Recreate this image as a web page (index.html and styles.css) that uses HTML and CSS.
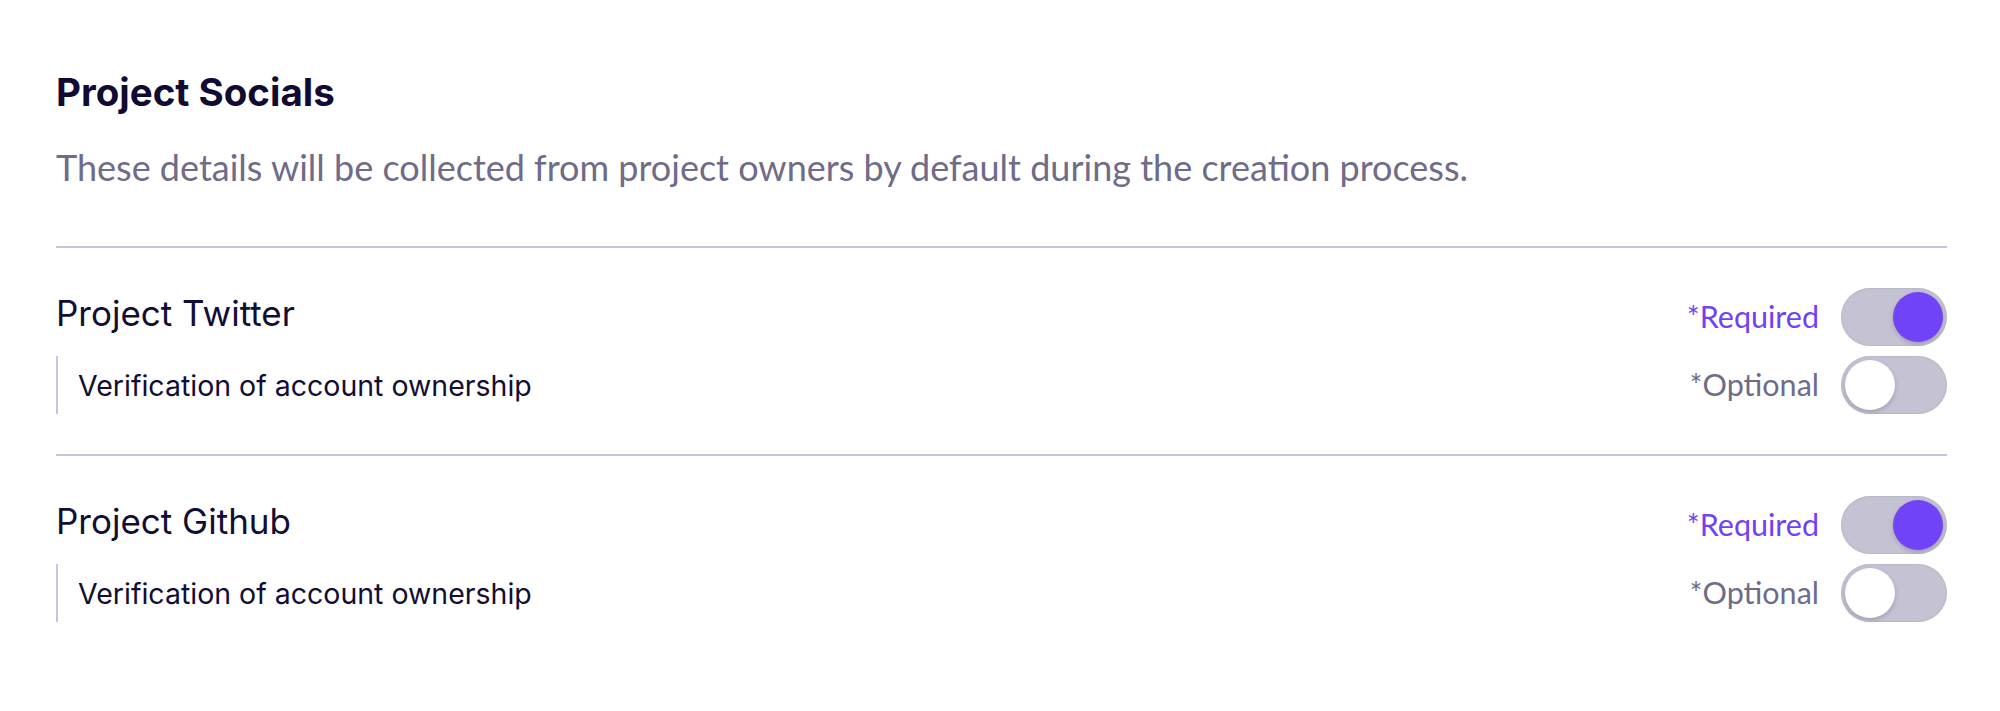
FILE: index.html
```html
<!DOCTYPE html>
<html>
<head>
    <meta charset="utf-8">
    <title>Project Socials</title>
    <link rel="stylesheet" href="styles.css">
</head>
<body>
    <div class="container">
        <h1 class="title">Project Socials</h1>
        <p class="subtitle">These details will be collected from project owners by default during the creation process.</p>

        <div class="social-group">
            <div class="row">
                <div class="row-label">Project Twitter</div>
                <div class="row-control">
                    <span class="flag required">*Required</span>
                    <label class="switch">
                        <input type="checkbox" checked>
                        <span class="slider"></span>
                    </label>
                </div>
            </div>
            <div class="row">
                <div class="row-sublabel">Verification of account ownership</div>
                <div class="row-control">
                    <span class="flag optional">*Optional</span>
                    <label class="switch">
                        <input type="checkbox">
                        <span class="slider"></span>
                    </label>
                </div>
            </div>
        </div>

        <div class="social-group">
            <div class="row">
                <div class="row-label">Project Github</div>
                <div class="row-control">
                    <span class="flag required">*Required</span>
                    <label class="switch">
                        <input type="checkbox" checked>
                        <span class="slider"></span>
                    </label>
                </div>
            </div>
            <div class="row">
                <div class="row-sublabel">Verification of account ownership</div>
                <div class="row-control">
                    <span class="flag optional">*Optional</span>
                    <label class="switch">
                        <input type="checkbox">
                        <span class="slider"></span>
                    </label>
                </div>
            </div>
        </div>
    </div>
</body>
</html>
```

FILE: styles.css
```css
body {
    margin: 0;
    background-color: #fff;
    font-family: Inter, "Noto Sans", sans-serif;
    color: #120e33;
}

.container {
    padding: 70px 53px 0 56px;
}

.title {
    margin: 0;
    font-size: 38.5px;
    line-height: 44px;
    font-weight: 700;
    color: #110b33;
}

.subtitle {
    margin: 31px 0 57px;
    font-family: Lato, "Noto Sans", sans-serif;
    font-size: 36px;
    line-height: 44px;
    color: #6f6b89;
}

.social-group {
    display: flex;
    flex-direction: column;
    gap: 10px;
    padding: 40px 0;
    border-top: 2px solid #c8c6d6;
}

.row {
    display: flex;
    align-items: center;
    justify-content: space-between;
    height: 58px;
}

.row-label {
    font-size: 35px;
    padding-bottom: 8px;
}

.row-sublabel {
    display: flex;
    align-items: center;
    height: 58px;
    padding-left: 20px;
    border-left: 2px solid #c8c6d6;
    font-size: 28.5px;
}

.row-control {
    display: flex;
    align-items: center;
    gap: 22px;
}

.flag {
    font-family: Lato, "Noto Sans", sans-serif;
    font-size: 30.5px;
    padding-bottom: 3px;
}

.required {
    color: #7041f5;
}

.optional {
    color: #6f6b89;
}

.switch {
    position: relative;
    display: block;
    width: 106px;
    height: 58px;
}

.switch input {
    display: none;
}

.slider {
    position: absolute;
    inset: 0;
    border-radius: 29px;
    background-color: #c5c3d3;
    box-shadow: inset 0 0 2px rgba(60, 55, 90, 0.25);
}

.slider::before {
    content: "";
    position: absolute;
    top: 4px;
    left: 4px;
    width: 50px;
    height: 50px;
    border-radius: 50%;
    background-color: #fff;
    box-shadow: 0 2px 4px rgba(40, 35, 70, 0.25);
}

.switch input:checked + .slider::before {
    left: 52px;
    background-color: #7143f6;
}
```
